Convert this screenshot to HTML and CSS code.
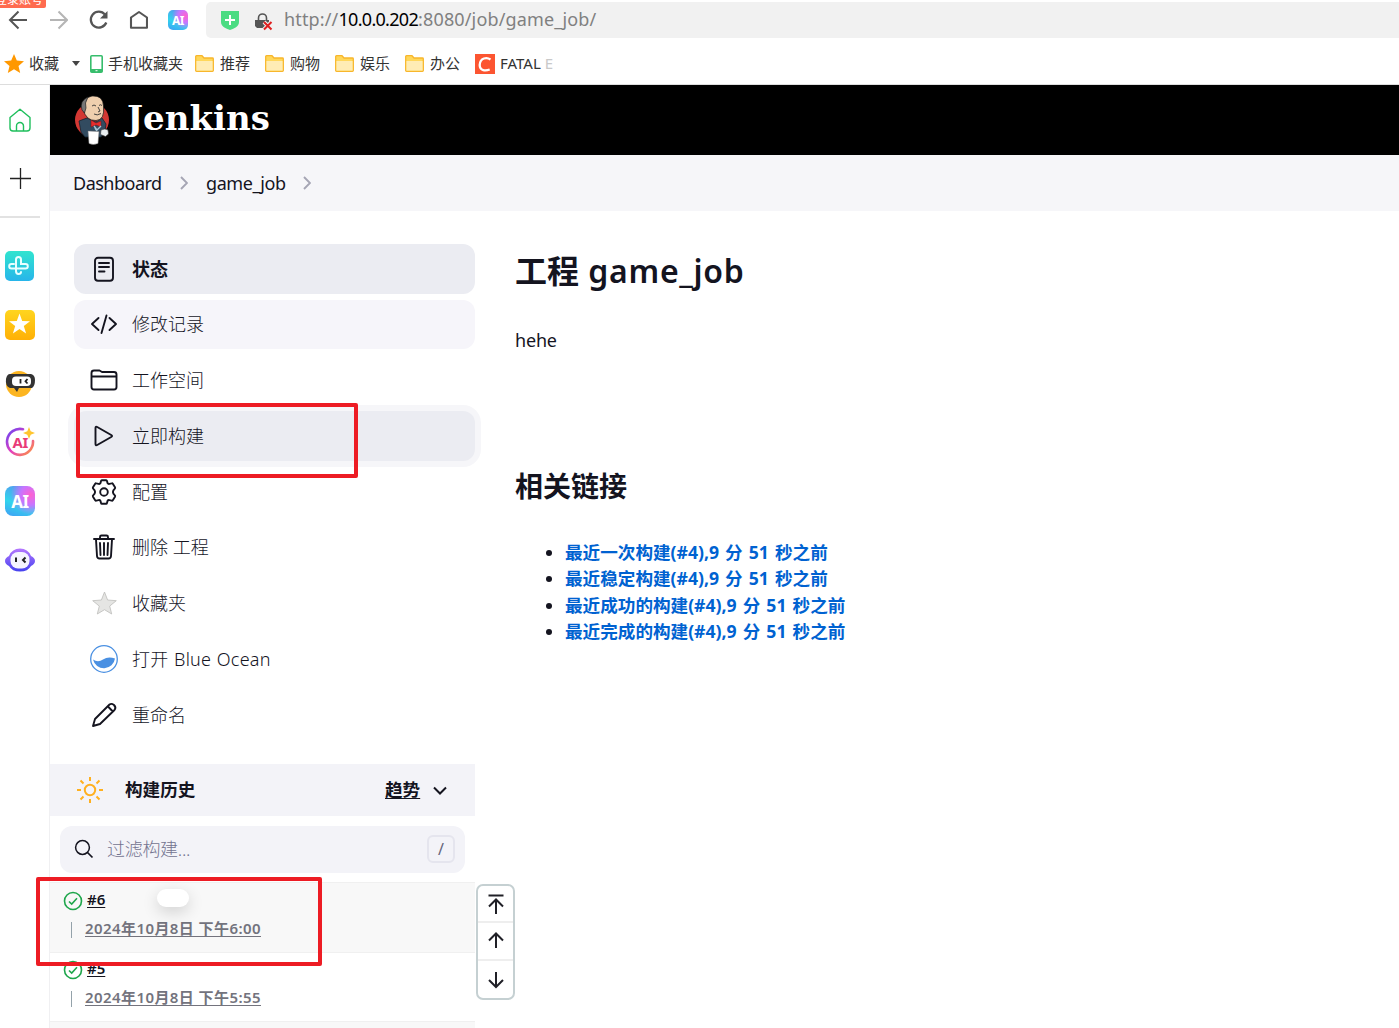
FILE: index.html
```html
<!DOCTYPE html>
<html lang="zh-CN">
<head>
<meta charset="utf-8">
<title>game_job [Jenkins]</title>
<link rel="stylesheet" href="styles.css">
</head>
<body>
<div class="browser">
  <div class="toolbar">
    <span class="login-tip">登录账号</span>
    <svg class="nav-icon" width="20" height="20" viewBox="0 0 20 20"><path d="M19 10H2M10.500 1.500L2 10l8.500 8.500" stroke="#555" stroke-width="2"/></svg>
    <svg class="nav-icon" width="20" height="20" viewBox="0 0 20 20"><path d="M2 10h17M10.500 1.500L19 10l-8.500 8.500" stroke="#b5b5b5" stroke-width="2"/></svg>
    <svg class="nav-icon" width="20" height="20" viewBox="0 0 20 20"><path d="M18.300 12.500A8 8 0 1 1 17 4.500" stroke="#555" stroke-width="2.300"/><path d="M19.500 1v7.500H12z" fill="#555"/></svg>
    <svg class="nav-icon" width="20" height="20" viewBox="0 0 20 20"><path d="M3 17.700V7.500L11 2l8 5.500v10.200z" stroke="#555" stroke-width="2.100" stroke-linejoin="round"/></svg>
    <span class="ai-tile small">AI</span>
    <div class="address">
      <svg width="18" height="19" viewBox="0 0 18 19"><path d="M0 0h18v11c0 5-6 7-9 8-3-1-9-3-9-8z" fill="#4bdc82"/><path d="M9 4v10M4 9h10" stroke="#fff" stroke-width="2"/></svg>
      <svg class="lock" width="18" height="18" viewBox="0 0 18 18"><path d="M3.500 8V5a4 4 0 0 1 8 0v3" fill="none" stroke="#555" stroke-width="1.600"/><path d="M0 7h14v8H2L0 13z" fill="#555"/><path d="M9 9l7.500 7.500M16.500 9L9 16.500" stroke="#f1f1f1" stroke-width="4"/><path d="M9 9l7.500 7.500M16.500 9L9 16.500" stroke="#e02020" stroke-width="2"/></svg>
      <span class="url">http://<b>10.0.0.202</b>:8080/job/game_job/</span>
    </div>
  </div>
  <div class="bookmarks">
    <svg class="fav-star" width="20" height="19" viewBox="0 0 20 19"><path d="M10 0l2.800 6.600 7.200.6-5.500 4.700 1.700 7.100L10 15.200 3.800 19l1.700-7.100L0 7.200l7.200-.6z" fill="#ff9800"/></svg>
    <span class="bm-fav">收藏</span>
    <svg class="caret" width="8" height="5" viewBox="0 0 8 5"><path d="M0 0h8L4 5z" fill="#444"/></svg>
    <svg class="phone" width="13" height="18" viewBox="0 0 13 18"><rect x=".8" y=".8" width="11.400" height="16.400" rx="1" fill="#fff" stroke="#37bd6c" stroke-width="1.600"/><path d="M1 14h11v3H1z" fill="#37bd6c"/><path d="M5.500 15.700h2" stroke="#fff"/></svg>
    <span class="bm-phone">手机收藏夹</span>
    <span class="bm"><svg class="folder" width="19" height="17" viewBox="0 0 19 17"><path d="M.7 15.500V1.500Q.7.700 1.500.700H7l2 2.300h8.500q.8 0 .8.800v11.700q0 .8-.8.800h-16q-.8 0-.8-.8z" fill="#ffd75a" stroke="#f8b62b" stroke-width="1.300"/><path d="M1.400 6h16.200v9.600H1.400z" fill="#ffecb5"/></svg>推荐</span>
    <span class="bm"><svg class="folder" width="19" height="17" viewBox="0 0 19 17"><path d="M.7 15.500V1.500Q.7.700 1.500.700H7l2 2.300h8.500q.8 0 .8.800v11.700q0 .8-.8.800h-16q-.8 0-.8-.8z" fill="#ffd75a" stroke="#f8b62b" stroke-width="1.300"/><path d="M1.400 6h16.200v9.600H1.400z" fill="#ffecb5"/></svg>购物</span>
    <span class="bm"><svg class="folder" width="19" height="17" viewBox="0 0 19 17"><path d="M.7 15.500V1.500Q.7.700 1.500.700H7l2 2.300h8.500q.8 0 .8.800v11.700q0 .8-.8.800h-16q-.8 0-.8-.8z" fill="#ffd75a" stroke="#f8b62b" stroke-width="1.300"/><path d="M1.400 6h16.200v9.600H1.400z" fill="#ffecb5"/></svg>娱乐</span>
    <span class="bm"><svg class="folder" width="19" height="17" viewBox="0 0 19 17"><path d="M.7 15.500V1.500Q.7.700 1.500.700H7l2 2.300h8.500q.8 0 .8.800v11.700q0 .8-.8.800h-16q-.8 0-.8-.8z" fill="#ffd75a" stroke="#f8b62b" stroke-width="1.300"/><path d="M1.400 6h16.200v9.600H1.400z" fill="#ffecb5"/></svg>办公</span>
    <svg class="csdn" width="20" height="20" viewBox="0 0 20 20"><path d="M0 0h20v20H0z" fill="#fc5531"/><path d="M15.500 5.500C12 3 5 3.500 4.700 11c0 6 6 6 10 4.500" fill="none" stroke="#fff" stroke-width="2.300"/></svg>
    <span class="fatal">FATAL <i>E</i></span>
  </div>
</div>
<div class="window">
  <nav class="dock">
    <svg class="dock-home" width="22" height="24" viewBox="0 0 22 24"><path d="M1 9.500L11 1.200l10 8.300V20q0 3-3 3H4q-3 0-3-3zM7.500 23v-5a3.500 3.500 0 0 1 7 0v5" fill="none" stroke="#1fbf5c" stroke-width="1.400" stroke-linejoin="round"/></svg>
    <svg class="dock-plus" width="22" height="22" viewBox="0 0 22 22"><path d="M10.500 0v21M0 10.500h21" stroke="#222" stroke-width="1.300"/></svg>
    <div class="dock-line"></div>
    <div class="dock-apps">
      <svg width="30" height="30" viewBox="0 0 30 30"><defs><linearGradient id="cy" x2="0" y2="1"><stop stop-color="#31e4cf"/><stop offset="1" stop-color="#27b5ea"/></linearGradient></defs><rect width="29" height="30" rx="5" fill="url(#cy)"/><path d="M11 17.500V8.500a2.500 2.500 0 0 1 5 0V13h4.500a2.300 2.300 0 0 1 0 4.600H6.500a2.300 2.300 0 0 1 0-4.600H9M11 17.500V20q0 3 2.500 3t2.500-2" fill="none" stroke="#e9ffff" stroke-width="2" stroke-linecap="round"/></svg>
      <svg width="30" height="30" viewBox="0 0 30 30"><defs><linearGradient id="ye" x2="0" y2="1"><stop stop-color="#ffd51f"/><stop offset="1" stop-color="#ffb006"/></linearGradient></defs><rect width="30" height="30" rx="5" fill="url(#ye)"/><path d="M14.500 3.500l2.700 7.500 7.800.2-6.200 4.700 2.300 7.600-6.600-4.400-6.600 4.400 2.300-7.600L4 11.200l7.800-.2z" fill="#fff"/></svg>
      <svg width="30" height="30" viewBox="0 0 30 30"><circle cx="14" cy="15" r="13" fill="#fcb521"/><path d="M5 5h21q4 1 4 6 0 6-3 8H14l-2 4-3-4H5Q0 17 1 10q1-5 4-5z" fill="#333"/><rect x="7" y="7.500" width="19" height="9.500" rx="4" fill="#fff"/><path d="M15.500 10v4.500M22.500 10l-2 2.300 2 2.200" fill="none" stroke="#222" stroke-width="1.800"/></svg>
      <svg width="30" height="30" viewBox="0 0 30 30"><defs><linearGradient id="ring" x2="1" y2="1"><stop stop-color="#6245f5"/><stop offset=".5" stop-color="#e33fc0"/><stop offset="1" stop-color="#ff9838"/></linearGradient></defs><path d="M18 2.200A13 13 0 1 0 28 14" fill="none" stroke="url(#ring)" stroke-width="2.600" stroke-linecap="round"/><text x="7.500" y="20.500" class="ai-text" fill="#e93b78">AI</text><path d="M24 0l1.700 4.300L30 6l-4.300 1.700L24 12l-1.700-4.300L18 6l4.300-1.700z" fill="#ffc52f"/></svg>
      <span class="ai-tile">AI</span>
      <svg width="30" height="30" viewBox="0 0 30 30"><defs><linearGradient id="vi" x2="0" y2="1"><stop stop-color="#b577ff"/><stop offset="1" stop-color="#4542ef"/></linearGradient></defs><path d="M4 11Q7 3.500 15 3.500T26 11q4 2 4 5t-4 5q-3 5.500-11 5.500T4 21q-4-2-4-5t4-5z" fill="url(#vi)"/><rect x="5.500" y="7" width="19" height="16.500" rx="7.500" fill="#f5f4ff"/><path d="M11 12.500v4.500M20.500 12.500L18 15l2.500 2.500" fill="none" stroke="#222" stroke-width="2"/></svg>
    </div>
  </nav>
  <div class="page">
    <header class="header">
      <svg class="butler" width="36" height="50" viewBox="0 0 36 50"><circle cx="18" cy="25" r="17" fill="#d33833"/><path d="M5 26l8-3 9 4 6-4 4 6-1 7-4 6H11L7 37z" fill="#324b60" stroke="#142430" stroke-width=".8"/><path d="M9 14Q8 3 18 1q11-1 11.500 10Q31 25 22 25.500 12 26 9 14z" fill="#efcfae" stroke="#111" stroke-width=".7"/><path d="M8 15Q5 6 14 2l-2.500 6 .5 5-1.500 5z" fill="#777" stroke="#222" stroke-width=".7"/><path d="M18 11q2-2 4 0M25 10.500q1.500-1.500 3 0M24 12l2 4-2 1M20 19q3 2 7-.5" fill="none" stroke="#333" stroke-width=".9"/><path d="M17 25l5 3 5-2v6l-5-2-5 2z" fill="#e62d2d" stroke="#6c1717" stroke-width=".5"/><path d="M20 31l3 4 4-4M21 33l2 3" stroke="#a7c4d5" fill="none" stroke-width="1.400"/><path d="M14 36l11 .500-1 12q-5 2-9 0z" fill="#fff" stroke="#777" stroke-width=".5"/><path d="M27 35q4-2 7 0l.500 4-3 2.500-5-2z" fill="#e9eef0" stroke="#333" stroke-width=".6"/></svg>
      <span class="brand">Jenkins</span>
    </header>
    <div class="crumbs">
      <span class="crumb-root">Dashboard</span>
      <svg class="chev" width="8" height="14" viewBox="0 0 8 14"><path d="M1 1l6 6-6 6" fill="none" stroke="#a5a5b4" stroke-width="1.900"/></svg>
      <span class="crumb-job">game_job</span>
      <svg class="chev last" width="8" height="14" viewBox="0 0 8 14"><path d="M1 1l6 6-6 6" fill="none" stroke="#a5a5b4" stroke-width="1.900"/></svg>
    </div>
    <div class="content">
      <aside class="side">
        <div class="tasks">
          <div class="task active"><svg width="28" height="28" viewBox="0 0 28 28"><rect x="5" y="2.800" width="18" height="23" rx="3"/><path d="M9 8h10M9 12h10M9 16.500h5.500"/></svg><span>状态</span></div>
          <div class="task soft"><svg width="28" height="28" viewBox="0 0 28 28"><path d="M8.500 8L2 14l6.500 6M19.500 8l6.500 6-6.500 6M16.500 5.500l-5 17.500"/></svg><span>修改记录</span></div>
          <div class="task"><svg width="28" height="28" viewBox="0 0 28 28"><path d="M1.500 21V7q0-2.500 2.500-2.500h5.500L12 6h12q2.500 0 2.500 2.500V21q0 2.500-2.500 2.500H4q-2.500 0-2.500-2.500zM1.500 10.500h25"/></svg><span>工作空间</span></div>
          <div class="task pressed"><svg width="28" height="28" viewBox="0 0 28 28"><path d="M5.500 6v16q0 2 1.700 1l14-8q1.700-1 0-2l-14-8q-1.700-1-1.700 1z"/></svg><span>立即构建</span></div>
          <div class="task"><svg width="28" height="28" viewBox="0 0 28 28"><path d="M11.800 2.300h4.400q.6 0 .8.800l.5 1.900q.6 1.200 1.900.9l2.300-.6q.7-.2 1.100.4l2.200 3.600q.4.700-.1 1.200l-1.500 1.800q-.9 1.700 0 3.400l1.500 1.800q.5.500.1 1.200l-2.200 3.600q-.4.600-1.100.4l-2.300-.6q-1.300-.3-1.900.9l-.5 1.900q-.2.800-.8.800h-4.400q-.6 0-.8-.8l-.5-1.900q-.6-1.200-1.900-.9l-2.300.6q-.7.200-1.100-.4L3 18.700q-.4-.7.100-1.200l1.500-1.800q.9-1.700 0-3.400l-1.500-1.800Q2.600 10 3 9.300l2.200-3.600q.4-.6 1.100-.4l2.300.6q1.300.3 1.900-.9l.5-1.900q.2-.8.800-.8z"/><circle cx="14" cy="14" r="3.800"/></svg><span>配置</span></div>
          <div class="task"><svg width="28" height="28" viewBox="0 0 28 28"><path d="M4 6h20M10 5.500V4q0-1.500 1.500-1.500h5Q18 2.500 18 4v1.500M6 6.500L7 23q.2 2.500 2.500 2.500h9q2.300 0 2.500-2.500l1-16.500M10 10l.5 12M14 10v12M18 10l-.5 12"/></svg><span>删除 工程</span></div>
          <div class="task"><svg class="filled" width="28" height="28" viewBox="0 0 28 28"><path d="M14.500 3l3.100 8 8.700.7-6.600 5.400 2 7.900-7.200-4.300L7.300 25l2-7.900-6.600-5.400 8.700-.7z" fill="#e5e5e3" stroke="#bdbdba" stroke-width=".8"/></svg><span>收藏夹</span></div>
          <div class="task"><svg class="filled" width="28" height="28" viewBox="0 0 28 28"><circle cx="14" cy="14" r="13.300" fill="#fff" stroke="#4a90e2" stroke-width="1.300"/><path d="M3 14.500q5 3.500 10 0t12-1A11.200 11.200 0 0 1 3 14.500z" fill="#4a90e2"/></svg><span class="ocean">打开 Blue Ocean</span></div>
          <div class="task"><svg width="28" height="28" viewBox="0 0 28 28"><path d="M3 25l2-7L19.500 3.500q2-1.500 4.500.500 2.500 2.500.500 5L10 23zM18 5.500l4.800 5"/></svg><span>重命名</span></div>
        </div>
        <div class="history-head">
          <svg width="28" height="28" viewBox="0 0 28 28"><g fill="none" stroke="#ffb01f" stroke-width="2"><circle cx="14" cy="14" r="5.200"/><path d="M14 1v4M14 23v4M1 14h4M23 14h4M4.500 4.500l3 3M20.500 20.500l3 3M4.500 23.500l3-3M20.500 7.500l3-3"/></g></svg>
          <span class="history-title">构建历史</span><span class="trend">趋势</span>
          <svg class="trend-arrow" width="14" height="9" viewBox="0 0 14 9"><path d="M1 1.500l6 6 6-6" fill="none" stroke="#14141f" stroke-width="2"/></svg>
        </div>
        <div class="search">
          <svg width="20" height="20" viewBox="0 0 20 20"><circle cx="8.500" cy="8.500" r="6.900" fill="none" stroke="#14141f" stroke-width="1.500"/><path d="M13.500 13.500l5 5" stroke="#14141f" stroke-width="1.700"/></svg>
          <span class="placeholder">过滤构建...</span><span class="key">/</span>
        </div>
        <div class="builds">
          <div class="build odd">
            <div class="build-line"><svg width="20" height="20" viewBox="0 0 20 20"><circle cx="10" cy="10" r="8.500"/><path d="M6 10.500l2.700 2.600L14 7.300"/></svg><span class="num">#6</span></div>
            <div class="build-date"><i class="bar"></i><span>2024年10月8日 下午6:00</span></div>
            <div class="bubble"></div>
          </div>
          <div class="build">
            <div class="build-line"><svg width="20" height="20" viewBox="0 0 20 20"><circle cx="10" cy="10" r="8.500"/><path d="M6 10.500l2.700 2.600L14 7.300"/></svg><span class="num">#5</span></div>
            <div class="build-date"><i class="bar"></i><span>2024年10月8日 下午5:55</span></div>
          </div>
          <div class="build odd"></div>
        </div>
        <div class="pager">
          <span><svg width="18" height="22" viewBox="0 0 18 22"><path d="M1.500 2.500h15M9 21V7.500M2 13.500l7-7 7 7"/></svg></span>
          <span><svg width="18" height="18" viewBox="0 0 18 18"><path d="M9 16V2M2 8.500l7-7 7 7"/></svg></span>
          <span><svg width="18" height="18" viewBox="0 0 18 18"><path d="M9 1v14M2 9l7 7 7-7"/></svg></span>
        </div>
        <div class="mark mark-build"></div>
        <div class="mark mark-history"></div>
      </aside>
      <main class="main">
        <h1>工程 <span>game_job</span></h1>
        <p>hehe</p>
        <h2>相关链接</h2>
        <ul>
          <li><a>最近一次构建(#4),9 分 51 秒之前</a></li>
          <li><a>最近稳定构建(#4),9 分 51 秒之前</a></li>
          <li><a>最近成功的构建(#4),9 分 51 秒之前</a></li>
          <li><a>最近完成的构建(#4),9 分 51 秒之前</a></li>
        </ul>
      </main>
    </div>
  </div>
</div>
</body>
</html>
```
FILE: styles.css
```css
* { box-sizing: border-box; }
body { margin: 0; width: 1399px; height: 1028px; overflow: hidden; background: #fff; color: #14141f; font-family: "Noto Sans", "Noto Sans CJK SC", sans-serif; font-size: 18px; }
svg { display: block; flex: none; }
span { white-space: nowrap; }
.browser { height: 85px; border-bottom: 1px solid #ddd; }
.toolbar { position: relative; display: flex; align-items: center; height: 40px; padding-left: 8px; gap: 20px; }
.nav-icon { fill: none; }
.login-tip { position: absolute; left: 0; top: 0; width: 46px; height: 8px; background: #ff6b4f; color: #fff; font-size: 12px; line-height: 0; text-indent: -5px; overflow: hidden; border-radius: 0 0 2px 0; }
.ai-tile { display: flex; align-items: center; justify-content: center; width: 30px; height: 30px; border-radius: 8px; background: radial-gradient(circle at 85% 30%, #ff62cf 0, #c875ff 30%, transparent 60%), linear-gradient(200deg, #5a8bf0, #32d5ec 60%, #3f9df5); color: #fff; font: bold 17px "Noto Sans", sans-serif; letter-spacing: -.5px; }
.ai-tile.small { width: 20px; height: 20px; border-radius: 5px; font-size: 12px; }
.ai-text { font: bold 15px "Noto Sans", sans-serif; letter-spacing: -.5px; }
.address { display: flex; align-items: center; flex: 1; height: 36px; margin-left: -2px; padding-left: 15px; background: #f1f1f1; border-radius: 5px 0 0 5px; }
.lock { margin: 3px 0 0 16px; }
.url { margin-left: 11px; color: #808080; font-size: 18px; line-height: 34px; letter-spacing: .15px; margin-top: -2px; }
.url b { color: #000; font-weight: 400; letter-spacing: -.7px; }
.bookmarks { display: flex; align-items: center; height: 44px; padding: 3px 0 0 4px; color: #333; font-size: 15px; }
.bookmarks > span { line-height: 24px; margin-top: -2px; }
.folder { margin-top: 2px; }
.bm-fav { width: 31px; margin-left: 5px; }
.caret { margin-left: 12px; }
.phone { margin-left: 10px; }
.bm-phone { width: 76px; margin-left: 5px; }
.bm { display: flex; align-items: center; gap: 6px; width: 70px; padding-left: 11px; }
.csdn { margin-left: 11px; }
.fatal { margin-left: 5px; }
.fatal i { font-style: normal; color: #c9c9c9; }
.window { display: flex; height: 943px; }
.dock { width: 50px; flex: none; border-right: 1px solid #f0f0f2; padding-top: 23px; }
.dock-home { margin-left: 9px; }
.dock-plus { margin: 36px 0 0 10px; }
.dock-line { width: 40px; height: 2px; margin-top: 26px; background: #e2e2e2; }
.dock-apps { display: flex; flex-direction: column; gap: 28.800px; padding: 33px 0 0 5px; }
.page { flex: 1; min-width: 0; }
.header { display: flex; height: 70px; padding: 10px 0 0 24px; background: #000; color: #fff; }
.brand { margin-left: 17px; font: bold 34px/46px "DejaVu Serif", serif; }
.crumbs { display: flex; align-items: center; height: 56px; padding-left: 23px; background: #f6f6f9; }
.crumbs span { line-height: 56px; font-size: 18px; }
.crumb-root { width: 88px; letter-spacing: -.5px; }
.crumb-job { width: 80px; margin-left: 18px; letter-spacing: -.4px; }
.chev { margin-left: 19px; }
.chev.last { margin-left: 17px; }
.content { display: flex; height: 817px; }
.side { position: relative; width: 425px; flex: none; }
.tasks { display: flex; flex-direction: column; gap: 5.700px; height: 553px; padding: 33px 0 0 24px; }
.task { display: flex; align-items: center; flex: none; gap: 14px; width: 401px; height: 50px; padding-left: 16px; border-radius: 12px; font-weight: 300; }
.task svg:not(.filled) { fill: none; stroke: #14141f; stroke-width: 1.900; stroke-linecap: round; stroke-linejoin: round; }
.task span { line-height: 28px; }
.task .ocean { letter-spacing: .25px; word-spacing: .6px; }
.active { background: #ebecf2; font-weight: 700; }
.soft { background: #f6f5fa; height: 49px; margin-bottom: 1px; }
.pressed { background: #ebecf2; box-shadow: 0 0 0 6px #f6f6f9; }
.history-head { display: flex; align-items: center; height: 52px; padding-left: 26px; background: #f3f3f8; font-weight: 700; }
.history-head span { margin-top: -4px; font-size: 17.600px; }
.history-title { width: 71px; margin-left: 21px; }
.trend { width: 35px; margin-left: 189px; text-decoration: underline; text-underline-offset: 2px; }
.trend-arrow { margin-left: 13px; }
.search { display: flex; align-items: center; width: 405px; height: 47px; margin: 10px 0 9px 10px; padding: 0 10px 1px 14px; border-radius: 12px; background: #f3f3f8; }
.placeholder { flex: 1; margin: -2px 0 0 13px; color: #737390; font-weight: 300; letter-spacing: -.3px; }
.key { width: 28px; height: 28px; border: 2px solid #e5e5ee; border-radius: 6px; color: #65657b; font-size: 16px; line-height: 25px; text-align: center; }
.builds { height: 147px; overflow: hidden; }
.build { position: relative; height: 69.500px; border-top: 1px solid #f0f0f0; padding: 5px 0 0 13px; }
.odd { background: #f8f8f8; }
.build-line { display: flex; align-items: center; height: 21px; font-size: 15px; }
.build-line svg { margin-top: 4px; fill: none; stroke: #1ea64b; stroke-width: 1.600; }
.num { margin-left: 4px; font-weight: 600; text-decoration: underline; text-underline-offset: 2px; }
.build-date { display: flex; align-items: center; height: 36px; color: #73737d; font-size: 15px; font-weight: 600; }
.build-date span { margin-left: 13px; letter-spacing: .42px; text-decoration: underline; text-underline-offset: 2px; }
.bar { width: 1px; height: 16px; margin: 5px 0 0 8px; background: #94a2aa; }
.bubble { position: absolute; left: 107px; top: 6px; width: 32px; height: 18px; border-radius: 9px; background: #fff; box-shadow: 0 5px 16px rgba(0,0,0,.16); }
.pager { position: absolute; left: 426px; top: 673px; width: 39px; height: 116px; border: 2px solid #c5d0d2; border-radius: 7px; background: #fff; }
.pager span { display: flex; align-items: center; justify-content: center; height: 38px; border-bottom: 2px solid #eee; }
.pager span:first-child { height: 37px; }
.pager span:last-child { border: 0; height: 37px; }
.pager svg { fill: none; stroke: #202027; stroke-width: 2; }
.mark { position: absolute; border: 4px solid #ed1c24; border-radius: 2px; }
.mark-build { left: 26px; top: 192px; width: 282px; height: 75px; }
.mark-history { left: -14px; top: 666px; width: 286px; height: 89px; }
.main { padding: 33px 0 0 40px; }
h1 { margin: 0; height: 54px; font-size: 32px; line-height: 54px; white-space: nowrap; }
h1 span { font-weight: 600; letter-spacing: .7px; margin-left: 1px; }
p { height: 28px; margin: 28px 0 0; font-size: 18px; line-height: 28px; letter-spacing: -.2px; }
h2 { margin: 111px 0 0; height: 42px; font-size: 28px; line-height: 42px; }
ul { margin: 32px 0 0; padding-left: 50px; }
li { height: 26.400px; line-height: 26.400px; font-size: 17.600px; white-space: nowrap; }
a { color: #0062d1; font-weight: 700; word-spacing: 1.500px; }
```
